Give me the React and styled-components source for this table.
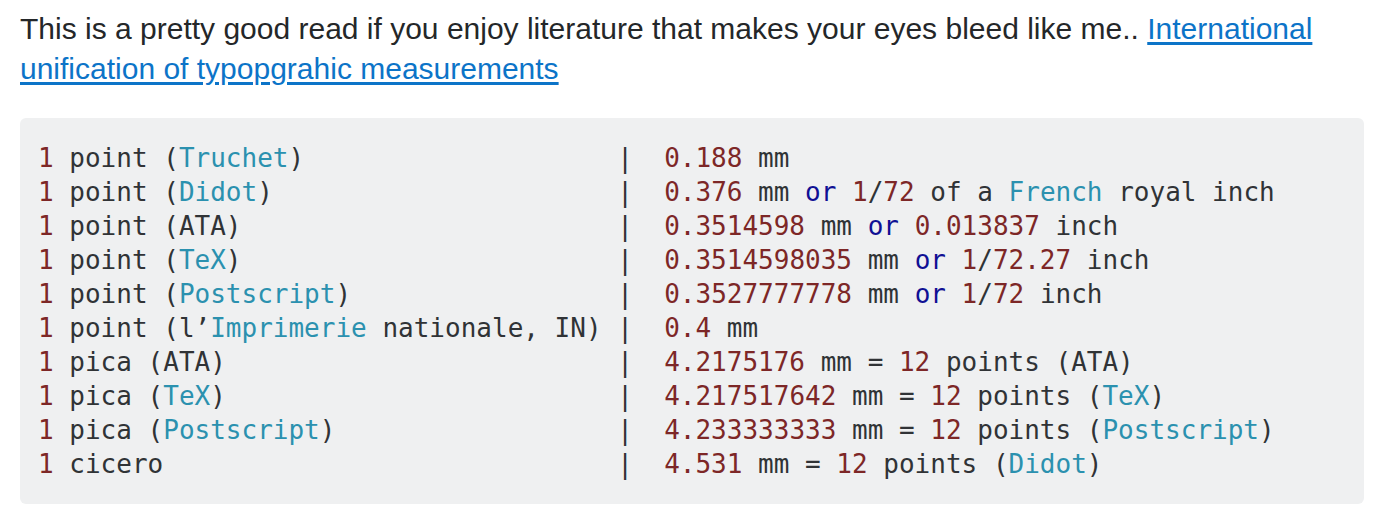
import React from "react";
import styled, { createGlobalStyle } from "styled-components";

const Global = createGlobalStyle`
  html, body { margin: 0; padding: 0; background: #ffffff; }
  body { font-family: "Liberation Sans", Arial, sans-serif; }
`;

const Page = styled.div`
  padding: 9px 18px 0 20px;
`;

const Para = styled.p`
  margin: 0 0 29px 0;
  font-size: 30px;
  line-height: 40px;
  color: #242729;
`;

const Link = styled.a`
  color: #0c74c8;
  text-decoration: underline;
  text-underline-offset: 3px;
`;

const Pre = styled.pre`
  margin: 0;
  background: #eff0f1;
  border-radius: 6px;
  padding: 23px 18px;
  font-family: "DejaVu Sans Mono", monospace;
  font-size: 26px;
  line-height: 34px;
  color: #303336;
  overflow: hidden;
`;

const Tok = styled.span`
  color: ${(p) =>
    p.$k === "n" ? "#7d2727" : p.$k === "t" ? "#2b91af" : p.$k === "k" ? "#101094" : "#303336"};
`;

// marked string: {n:...} number, {t:...} type, {k:...} keyword
const parse = (s) => {
  const out = [];
  const re = /\{([ntk]):([^}]*)\}/g;
  let last = 0;
  let m;
  let i = 0;
  while ((m = re.exec(s))) {
    if (m.index > last) out.push(<Tok key={i++}>{s.slice(last, m.index)}</Tok>);
    out.push(
      <Tok key={i++} $k={m[1]}>
        {m[2]}
      </Tok>
    );
    last = re.lastIndex;
  }
  if (last < s.length) out.push(<Tok key={i++}>{s.slice(last)}</Tok>);
  return out;
};

const visibleLen = (s) => s.replace(/\{[ntk]:([^}]*)\}/g, "$1").length;

const rows = [
  ["{n:1} point ({t:Truchet})", "{n:0.188} mm"],
  ["{n:1} point ({t:Didot})", "{n:0.376} mm {k:or} {n:1}/{n:72} of a {t:French} royal inch"],
  ["{n:1} point (ATA)", "{n:0.3514598} mm {k:or} {n:0.013837} inch"],
  ["{n:1} point ({t:TeX})", "{n:0.3514598035} mm {k:or} {n:1}/{n:72.27} inch"],
  ["{n:1} point ({t:Postscript})", "{n:0.3527777778} mm {k:or} {n:1}/{n:72} inch"],
  ["{n:1} point (l’{t:Imprimerie} nationale, IN)", "{n:0.4} mm"],
  ["{n:1} pica (ATA)", "{n:4.2175176} mm = {n:12} points (ATA)"],
  ["{n:1} pica ({t:TeX})", "{n:4.217517642} mm = {n:12} points ({t:TeX})"],
  ["{n:1} pica ({t:Postscript})", "{n:4.233333333} mm = {n:12} points ({t:Postscript})"],
  ["{n:1} cicero", "{n:4.531} mm = {n:12} points ({t:Didot})"],
];

const lines = rows.map(([l, r]) => l + " ".repeat(Math.max(1, 37 - visibleLen(l))) + "|  " + r);

export default function App() {
  return (
    <Page>
      <Global />
      <Para>
        This is a pretty good read if you enjoy literature that makes your eyes bleed like me..{" "}
        <Link href="#">International unification of typopgrahic measurements</Link>
      </Para>
      <Pre>
        <code>
          {lines.map((l, idx) => (
            <React.Fragment key={idx}>
              {parse(l)}
              {idx < lines.length - 1 ? "\n" : null}
            </React.Fragment>
          ))}
        </code>
      </Pre>
    </Page>
  );
}
